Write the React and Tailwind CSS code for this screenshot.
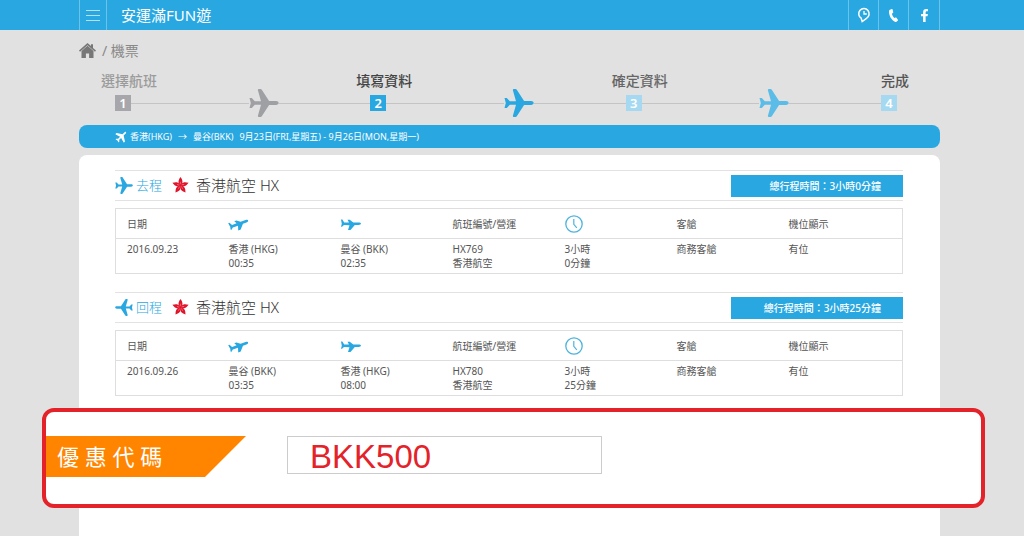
import { FaFacebookF } from "react-icons/fa";

const steps = [
  { no: 1, label: "選擇航班", text: "text-[#9b9b9b]", box: "bg-[#a7a7ab]", plane: "text-[#9fa0a4]" },
  { no: 2, label: "填寫資料", text: "text-[#444]", box: "bg-[#29a7e1]", plane: "text-[#29a7e1]" },
  { no: 3, label: "確定資料", text: "text-[#666]", box: "bg-[#a5d9f1]", plane: "text-[#5cbce8]" },
  { no: 4, label: "完成", text: "text-[#555]", box: "bg-[#a5d9f1]" },
];

const flights = [
  {
    title: "去程",
    back: false,
    total: "總行程時間：3小時0分鐘",
    date: "2016.09.23",
    from: ["香港 (HKG)", "00:35"],
    to: ["曼谷 (BKK)", "02:35"],
    flight: ["HX769", "香港航空"],
    time: ["3小時", "0分鐘"],
  },
  {
    title: "回程",
    back: true,
    total: "總行程時間：3小時25分鐘",
    date: "2016.09.26",
    from: ["曼谷 (BKK)", "03:35"],
    to: ["香港 (HKG)", "08:00"],
    flight: ["HX780", "香港航空"],
    time: ["3小時", "25分鐘"],
  },
];

function Plane({ className }) {
  return (
    <svg viewBox="0 0 30 28" fill="currentColor" className={className} aria-hidden="true">
      <path d="M.5 9h2.300l3 3.200H12L8.900 1.300C8.700.5 9.100 0 9.800 0h1.800c.5 0 .9.200 1.200.7l7.300 11.400h6.900c1.500 0 2.700.8 2.700 1.900s-1.200 1.900-2.700 1.900h-6.900l-7.300 11.400c-.3.500-.7.700-1.200.7H9.800c-.7 0-1.100-.5-.9-1.300L12 15.800H5.800l-3 3.200H.5L1.800 14z" />
    </svg>
  );
}

// side view, used in the table heads
function SidePlane({ className }) {
  return (
    <svg viewBox="0 0 20 12" fill="currentColor" className={className} aria-hidden="true">
      <path d="M0 1.500h1.400L3.200 4.500H8L6.500 1.800h2.200l3.600 2.700h5.200c1.500 0 2.500.4 2.500 1.100s-1 1.500-2.500 1.500h-3.700L9.500 12H7l1.500-4.800L3 7.100 1 8.800H0l.8-3.100z" />
    </svg>
  );
}

function Home() {
  return (
    <svg viewBox="0 0 17 15" fill="#777" className="h-[15px] w-[17px]" aria-hidden="true">
      <path d="M8.500 0 0 7.600l1 1.100L8.500 2.200 16 8.700l1-1.100-3-2.700V1.200h-2v1.900z" />
      <path d="M8.500 2.800 2.500 8V15h4.400v-4.500h3.200V15h4.400V8z" />
    </svg>
  );
}

function Phone() {
  return (
    <svg viewBox="0 0 9 13" fill="currentColor" className="h-[13px] w-[9px]" aria-hidden="true">
      <path d="M1 .7 2.700 0c.5-.1.800.1.900.5l.6 2.600c.1.400 0 .7-.3.900l-1.100.7c.5 1.700 1.400 3.200 2.500 4.400l1.200-.6c.4-.2.700-.1.900.2l1.500 2.100c.2.300.1.700-.2.900l-1.300 1.100c-.5.300-1 .3-1.500 0C2.400 10.700.1 7 0 2.700 0 1.700.2 1 1 .7z" />
    </svg>
  );
}

function Clock() {
  return (
    <svg viewBox="0 0 18 18" fill="none" stroke="#4db4dc" className="size-[18px]" aria-hidden="true">
      <circle cx="9" cy="9" r="8.200" strokeWidth="1.300" />
      <path d="M8.800 4v5.300l3 3.500" strokeWidth="1.200" />
    </svg>
  );
}

function Bauhinia() {
  return (
    <svg viewBox="-10 -10 20 20" className="size-[17px]" aria-hidden="true">
      {[0, 72, 144, 216, 288].map((deg) => (
        <path key={deg} transform={`rotate(${deg})`} d="M0 1-1.600-2C-2.900-4-2.600-6.500 0-10 2.600-6.500 2.900-4 1.600-2z" fill="#e0142a" />
      ))}
      {[0, 72, 144, 216, 288].map((deg) => (
        <path key={deg} transform={`rotate(${deg})`} d="M0-1.500C-.4-2.500-.3-3.500.2-4.500" stroke="#f7a8b0" strokeWidth=".6" fill="none" />
      ))}
    </svg>
  );
}

function ClockPin() {
  return (
    <svg viewBox="0 0 14 16" fill="none" stroke="currentColor" className="h-4 w-3.5" aria-hidden="true">
      <path d="M4.200 11.200A5.200 5.200 0 1 1 9.500 11.300L5.200 14.600z" strokeWidth="1.500" />
      <path d="M7 4v3h2.800" strokeWidth="1.300" />
    </svg>
  );
}

function Steps() {
  return (
    <ol className="ml-[21px] mr-4 mt-[13px] flex">
      {steps.map((s, i) => (
        <li key={s.no} className={i < 3 ? "flex flex-1 items-end" : "flex items-end"}>
          <div className="w-[58px]">
            <div className={`text-center text-[14px] font-medium leading-4 ${s.text}`}>{s.label}</div>
            <div className="flex h-7 items-center">
              <span className={i > 0 ? "h-px w-[15px] bg-[#c4c4c4]" : "w-[15px]"} />
              <span className={`size-4 text-center text-[13px] font-semibold leading-4 text-white ${s.box}`}>{s.no}</span>
              {i < 3 && <span className="h-px flex-1 bg-[#c4c4c4]" />}
            </div>
          </div>
          {s.plane && (
            <div className="flex h-7 flex-1 items-center">
              <span className="h-px w-3.5 bg-[#c4c4c4]" />
              <span className="h-px flex-1 bg-[#c4c4c4]" />
              <Plane className={`h-7 w-[30px] ${s.plane}`} />
              <span className="h-px flex-1 bg-[#c4c4c4]" />
            </div>
          )}
        </li>
      ))}
    </ol>
  );
}

function Lines({ items }) {
  return items.map((t) => <div key={t}>{t}</div>);
}

function Flight({ data }) {
  const th = "h-[30px] pl-[11px] text-left font-normal";
  const td = "h-[35px] pl-[11px] pt-[3px] align-top";
  return (
    <section>
      <div className="flex h-[31px] items-center border-y border-[#e2e2e2]">
        <Plane className={data.back ? "h-[17px] w-[18px] -scale-x-100 text-[#29a7e1]" : "h-[17px] w-[18px] text-[#29a7e1]"} />
        <span className="ml-[3px] text-[13px] font-light text-[#29a7e1]">{data.title}</span>
        <span className="ml-2.5">
          <Bauhinia />
        </span>
        <h2 className="ml-[7px] text-[15px] font-light text-[#333]">香港航空 HX</h2>
        <div className="ml-auto h-[22px] w-[172px] bg-[#29a7e1] pr-[22px] text-right text-[10px] font-medium leading-[22px] text-white">
          {data.total}
        </div>
      </div>
      <table className="mt-[7px] w-full table-fixed border-collapse border border-[#dedede] text-[10px] leading-[14px] text-[#555]">
        <thead>
          <tr className="border-b border-[#dedede]">
            <th className={`w-[102px] ${th}`}>日期</th>
            <th className={`w-[112px] ${th}`} aria-label="出發">
              <SidePlane className="h-3 w-5 -rotate-[20deg] text-[#29a7e1]" />
            </th>
            <th className={`w-[112px] ${th}`} aria-label="抵達">
              <SidePlane className="h-3 w-5 text-[#29a7e1]" />
            </th>
            <th className={`w-[112px] ${th}`}>航班編號/營運</th>
            <th className={`w-[112px] ${th}`} aria-label="時間">
              <Clock />
            </th>
            <th className={`w-[112px] ${th}`}>客艙</th>
            <th className={th}>機位顯示</th>
          </tr>
        </thead>
        <tbody>
          <tr>
            <td className={td}>{data.date}</td>
            <td className={td}><Lines items={data.from} /></td>
            <td className={td}><Lines items={data.to} /></td>
            <td className={td}><Lines items={data.flight} /></td>
            <td className={td}><Lines items={data.time} /></td>
            <td className={td}>商務客艙</td>
            <td className={td}>有位</td>
          </tr>
        </tbody>
      </table>
    </section>
  );
}

export default function App() {
  return (
    <div className="flex min-h-screen flex-col bg-[#e1e1e1] font-['Noto_Sans','Noto_Sans_CJK_TC',sans-serif]">
      {/* Top bar */}
      <header className="bg-[#29a7e1] pl-[79px] pr-[84px] text-white">
        <div className="flex h-[30px] items-center">
          <button type="button" aria-label="選單" className="flex h-full w-7 flex-col items-center justify-center gap-1 border-x border-[#6cc3ea]">
            <span className="h-px w-3.5 bg-[#b5e0f5]" />
            <span className="h-px w-3.5 bg-[#b5e0f5]" />
            <span className="h-px w-3.5 bg-[#b5e0f5]" />
          </button>
          <h1 className="ml-3.5 text-[15px]">安運滿FUN遊</h1>
          <nav className="ml-auto flex h-full divide-x divide-[#6cc3ea] border-x border-[#6cc3ea]">
            <a href="#hours" aria-label="營業時間" className="flex w-[30px] items-center justify-center"><ClockPin /></a>
            <a href="#phone" aria-label="電話" className="flex w-[30px] items-center justify-center"><Phone /></a>
            <a href="#facebook" aria-label="Facebook" className="flex w-[30px] items-center justify-center"><FaFacebookF size={13} /></a>
          </nav>
        </div>
      </header>

      <main className="flex flex-1 flex-col pl-[79px] pr-[84px]">
        <div className="mt-2.5 flex h-5 items-center gap-1.5 text-[14px] text-[#888]">
          <a href="#home" aria-label="首頁"><Home /></a>
          <span>/ 機票</span>
        </div>

        <Steps />

        {/* Route */}
        <div className="mt-2 flex h-[23px] items-center rounded-lg bg-[#29a7e1] pl-9 text-[9px] text-white">
          <Plane className="size-[13px] -rotate-45" />
          <span className="ml-0.5">香港(HKG)</span>
          <span className="ml-1.5">→</span>
          <span className="ml-1.5">曼谷(BKK)</span>
          <span className="ml-1.5">9月23日(FRI,星期五) - 9月26日(MON,星期一)</span>
        </div>

        <div className="mt-[7px] flex-1 rounded-t-lg bg-white pt-[15px]">
          <div className="flex flex-col gap-[18px] pl-9 pr-[37px]">
            {flights.map((f) => (
              <Flight key={f.title} data={f} />
            ))}
          </div>

          {/* Promo code */}
          <div className="-ml-[37px] -mr-[45px] mt-3 flex h-[100px] items-start rounded-xl border-4 border-[#e4222a] bg-white pt-6">
            <label
              htmlFor="promo"
              className="h-[41px] w-[200px] bg-[#ff8500] pl-[11px] text-[22px] leading-[41px] text-white [clip-path:polygon(0_0,100%_0,calc(100%-41px)_100%,0_100%)]"
            >
              優 惠 代 碼
            </label>
            <input
              id="promo"
              type="text"
              defaultValue="BKK500"
              className="ml-[41px] h-[38px] w-[315px] border border-[#ccc] bg-white pl-[22px] pt-1 font-['Liberation_Sans',Arial,sans-serif] text-[33px] text-[#e4222a] outline-none"
            />
          </div>
        </div>
      </main>
    </div>
  );
}
